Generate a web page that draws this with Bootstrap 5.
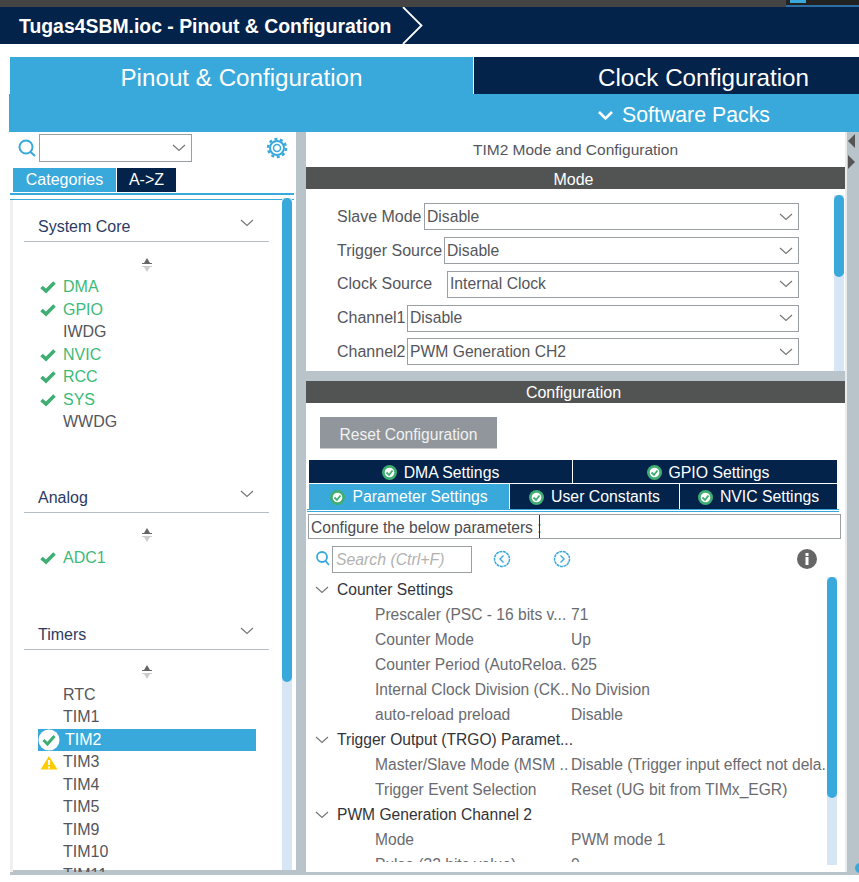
<!DOCTYPE html>
<html lang="en"><head><meta charset="utf-8"><title>Tugas4SBM.ioc</title>
<link href="https://cdn.jsdelivr.net/npm/bootstrap@5.3.0/dist/css/bootstrap.min.css" rel="stylesheet">
<style>
html,body{margin:0;height:882px;overflow:hidden;background:#fff}
body{width:859px;font:16px/22px "Liberation Sans",Arial,sans-serif;color:#55565c}
.cx-top{height:7px;background:#444;position:relative}
.cx-top i{display:block;position:absolute;right:0;top:0;width:73px;height:7px;background:#222;border-bottom:2px solid #2d6ea5}
.cx-top u{display:block;position:absolute;left:790px;top:0;width:16px;height:3px;background:#39a9dc}
.cx-title{height:37px;background:#03234b;color:#fff;font-weight:700;font-size:19.4px;padding-left:19px;position:relative}
.cx-title svg{position:absolute;left:402px;top:0}
.cx-gap{height:13px}
.cx-tabs{margin-left:10px;height:37px;font-size:24.2px;color:#fff}
.cx-tabs>div{display:flex;align-items:center;justify-content:center;padding-top:4px}
.cx-t1{width:463px;background:#39a9dc}
.cx-t2{width:386px;background:#03234b;border-left:1px solid #fff;padding-left:74px}
.cx-soft{margin-left:9px;height:38px;background:#39a9dc;color:#fff;font-size:21.3px;padding:4px 0 0 588px}
.cx-main{height:743px;margin-left:10px;border-bottom:3px solid #b8c3ca;background:#b8c3ca}
.cx-left{width:286px;background:#fff;position:relative;height:738px}
.cx-gut{width:10px;background:#b8c3ca}
.cx-right{width:539px;background:#b8c3ca;height:740px}
.cx-far{width:14px;background:#b8c3ca;position:relative;height:740px;border-left:2px solid #e9ecef}
.cx-far svg{position:absolute;left:0}
.cx-srch{height:36px;padding:0 0 4px 7px}
.cx-combo{border:1px solid #9a9fa3;height:28px;background:#fff;display:flex;align-items:center;justify-content:flex-end;padding-right:5px}
.cx-cw{width:153px;margin-left:2px}
.cx-gear{margin-left:74px}
.cx-cat{padding-left:3px;height:24px}
.cx-cat div{height:24px;line-height:24px;text-align:center;color:#fff}
.cx-cat .cx-a{width:103px;background:#39a9dc}
.cx-cat .cx-b{width:59px;background:#03234b;margin-left:1px}
.cx-dbl{height:4px;margin:1px 0 0;border-top:2px solid #39a9dc;border-bottom:1px solid #39a9dc;width:284px;box-sizing:content-box}
.cx-list{border-left:3px solid #f0f0f0;height:672px;overflow:hidden;padding:10px 0 0 11px}
.cx-hd{width:245px;height:32px;border-bottom:1px solid #b3bec7;color:#2d3a63;padding:6px 0 0 14px;display:flex;justify-content:space-between}
.cx-hd svg{margin:3px 15px 0 0}
.cx-sort{height:34px;padding-top:11px;width:245px;display:flex;align-items:center;justify-content:center}
.cx-it{height:22.5px;line-height:22.5px;padding-left:38px;width:232px;position:relative;white-space:nowrap;margin-left:1px}
.cx-it.cx-g{color:#3dba78}
.cx-it svg{position:absolute;left:15px;top:4px}
.cx-it.cx-sel{background:#39a9dc;color:#fff;padding-left:27px;width:218px;margin-left:14px}
.cx-sel svg{left:0;top:0}
.cx-list .cx-sec2{margin-top:47px}
.cx-list .cx-sec3{margin-top:48.6px}
.cx-sb{position:absolute;width:10px;background:#d6e6f4}
.cx-sb i{display:block;background:#39a9dc;border-radius:5px}
.cx-lsb{left:272px;top:66px;height:672px}
.cx-lsb i{height:484px}
.cx-panel{background:#fff;position:relative}
.cx-p1{height:239px}
.cx-pt{height:35px;text-align:center;padding-top:7px;font-size:15.5px}
.cx-bar{height:22px;line-height:25px;background:#525453;color:#fff;text-align:center;padding-right:4px}
.cx-p2 .cx-bar{line-height:23px}
.cx-form{padding:14.4px 0 0 31px}
.cx-fr{height:27px;margin-bottom:6.75px;display:flex;align-items:center;white-space:nowrap}
.cx-fr>span{flex:none}
.cx-fr .cx-combo{height:27px;padding-left:2px;justify-content:space-between;flex:none;color:#55565c;font-size:15.7px}
.cx-a87{width:87px}.cx-a107{width:107px}.cx-a110{width:110px}.cx-a70{width:70px}
.cx-b375{width:375px!important}.cx-b355{width:355px!important}.cx-b352{width:352px!important}.cx-b392{width:392px!important}
.cx-msb{left:528px;top:63px;height:176px}
.cx-msb i{height:82px}
.cx-sp{height:10px}
.cx-p2{height:491px}
.cx-rbtn{margin:14px 0 11px 14px;width:177px;height:32px;background:#90969b;color:#f1f1f1;border:0;border-radius:0;font:15.6px "Liberation Sans",Arial,sans-serif;border-bottom:1px solid #c8ccce;display:block;padding:5px 0 0}
.cx-tr{margin-left:3px;width:528px;height:23px;margin-bottom:1px;gap:1px;font-size:15.8px}
.cx-tb{background:#03234b;color:#fff;display:flex;align-items:center;justify-content:center;gap:7px;height:100%;padding-top:2px}
.cx-r2 .cx-tb{padding-top:1px}
.cx-pl{padding-left:6px}
.cx-on{background:#39a9dc}
.cx-r2{height:25px;margin-bottom:0}
.cx-w263{width:263px}.cx-w264{width:264px}.cx-w200{width:200px}.cx-w169{width:169px}.cx-w157{width:157px}
.cx-ln{margin:0 0 0 1px;height:3px;border-top:1px solid #39a9dc;border-bottom:1px solid #39a9dc;width:532px}
.cx-conf{margin:2px 0 0 2px;width:533px;height:25px;border:1px solid #9a9fa3;line-height:25px;padding-left:2px;white-space:nowrap;position:relative;color:#4a4b52;font-size:15.6px}
.cx-conf b{position:absolute;left:230px;top:0;height:23px;width:1px;background:#333}
.cx-sr{height:31px;margin-top:7px;padding-left:9px;position:relative}
.cx-inp{width:140px;height:27px;border:1px solid #9a9fa3;color:#b2b2b2;font-style:italic;padding-left:3px;line-height:26px;margin-left:1px;font-size:15.8px}
.cx-tree{height:285px;overflow:hidden;font-size:15.6px;color:#6a6b70}
.cx-row{height:25px;line-height:25px;display:flex;white-space:nowrap}
.cx-row span:first-child{width:265px;padding-left:69px;flex:none;overflow:hidden}
.cx-sec{color:#33343a;padding-left:9px;align-items:center}
.cx-sec svg{margin-right:8px;flex:none}
.cx-tsb{left:521px;top:196px;height:288px}
.cx-tsb i{height:221px}
.cx-ic1{margin:4px 0 0 21px}.cx-ic2{margin:4px 0 0 42px}.cx-ic3{margin:3px 0 0 226px}
.cx-a1{top:1px}.cx-a2{top:22px}
.cx-dot{position:absolute;left:8px;top:731px;width:10px;height:10px;border-radius:50%;background:#39a9dc}
</style></head><body>
<svg width="0" height="0" class="position-absolute"><defs>
<symbol id="chev" viewBox="0 0 14 8"><path d="M1 1 L7 6.5 L13 1" fill="none" stroke="#777" stroke-width="1.2"/></symbol>
<symbol id="tick" viewBox="0 0 16 14"><path d="M1.5 7 L6 11 L14.5 2.5" fill="none" stroke="#3fae73" stroke-width="3.6"/></symbol>
<symbol id="sort" viewBox="0 0 12 14"><path d="M6 0 L9 5 H11 V6 H1 V5 H3Z" fill="#666"/><path d="M1 8 H11 V9 H9 L6 14 L3 9 H1Z" fill="#ccc"/></symbol>
<symbol id="ok" viewBox="0 0 15 15"><circle cx="7.5" cy="7.5" r="7.5" fill="#3fae73"/><circle cx="7.5" cy="7.5" r="4.8" fill="#fff"/><path d="M4.5 7.5 L7 10 L10.5 5.5" fill="none" stroke="#3fae73" stroke-width="1.8"/></symbol>
</defs></svg>
<div class="cx-top"><i></i><u></u></div>
<div class="cx-title d-flex align-items-center">Tugas4SBM.ioc - Pinout &amp; Configuration
<svg width="22" height="37" viewBox="0 0 22 37"><path d="M1 0 L19.5 18.5 L1 37" fill="none" stroke="#fff" stroke-width="1.8"/></svg></div>
<div class="cx-gap"></div>
<div class="cx-tabs d-flex"><div class="cx-t1">Pinout &amp; Configuration</div><div class="cx-t2">Clock Configuration</div></div>
<div class="cx-soft d-flex align-items-center"><svg width="17" height="11" viewBox="0 0 17 11" class="me-2"><path d="M2 2 L8.5 8.5 L15 2" fill="none" stroke="#fff" stroke-width="2.6"/></svg>Software Packs</div>

<div class="cx-main d-flex">
 <div class="cx-left">
  <div class="cx-srch d-flex align-items-center">
   <svg width="20" height="21" viewBox="0 0 20 21"><circle cx="9" cy="9" r="6.5" fill="none" stroke="#39a9dc" stroke-width="2"/><path d="M13.5 14 L18 18" stroke="#39a9dc" stroke-width="2.2"/></svg>
   <div class="cx-combo cx-cw"><svg width="14" height="8"><use href="#chev"/></svg></div>
   <svg class="cx-gear" width="22" height="22" viewBox="0 0 22 22"><circle cx="11" cy="11" r="7" fill="none" stroke="#39a9dc" stroke-width="2"/><circle cx="11" cy="11" r="3.5" fill="none" stroke="#39a9dc" stroke-width="1.5"/><circle cx="11" cy="11" r="9" fill="none" stroke="#39a9dc" stroke-width="2.4" stroke-dasharray="3 2.65"/></svg>
  </div>
  <div class="cx-cat d-flex"><div class="cx-a">Categories</div><div class="cx-b">A-&gt;Z</div></div>
  <div class="cx-dbl"></div>
  <div class="cx-list">
   <div class="cx-hd"><span>System Core</span><svg width="14" height="8"><use href="#chev"/></svg></div>
   <div class="cx-sort"><svg width="12" height="14"><use href="#sort"/></svg></div>
   <div class="cx-it cx-g"><svg width="16" height="14"><use href="#tick"/></svg>DMA</div>
   <div class="cx-it cx-g"><svg width="16" height="14"><use href="#tick"/></svg>GPIO</div>
   <div class="cx-it">IWDG</div>
   <div class="cx-it cx-g"><svg width="16" height="14"><use href="#tick"/></svg>NVIC</div>
   <div class="cx-it cx-g"><svg width="16" height="14"><use href="#tick"/></svg>RCC</div>
   <div class="cx-it cx-g"><svg width="16" height="14"><use href="#tick"/></svg>SYS</div>
   <div class="cx-it">WWDG</div>
   <div class="cx-hd cx-sec2"><span>Analog</span><svg width="14" height="8"><use href="#chev"/></svg></div>
   <div class="cx-sort"><svg width="12" height="14"><use href="#sort"/></svg></div>
   <div class="cx-it cx-g"><svg width="16" height="14"><use href="#tick"/></svg>ADC1</div>
   <div class="cx-hd cx-sec3"><span>Timers</span><svg width="14" height="8"><use href="#chev"/></svg></div>
   <div class="cx-sort"><svg width="12" height="14"><use href="#sort"/></svg></div>
   <div class="cx-it">RTC</div>
   <div class="cx-it">TIM1</div>
   <div class="cx-it cx-sel"><svg width="22" height="22" viewBox="0 0 22 22"><circle cx="11" cy="11" r="10.5" fill="#fff"/><path d="M5.5 11 L9.5 15 L16.5 7" fill="none" stroke="#3fae73" stroke-width="3"/></svg>TIM2</div>
   <div class="cx-it"><svg width="18" height="15" viewBox="0 0 18 15"><path d="M9 1 L17.5 14.5 H0.5Z" fill="#fc0"/><path d="M9 5 V10 M9 11.5 V13.5" stroke="#fff" stroke-width="2"/></svg>TIM3</div>
   <div class="cx-it">TIM4</div>
   <div class="cx-it">TIM5</div>
   <div class="cx-it">TIM9</div>
   <div class="cx-it">TIM10</div>
   <div class="cx-it">TIM11</div>
  </div>
  <div class="cx-sb cx-lsb"><i></i></div>
 </div>
 <div class="cx-gut"></div>
 <div class="cx-right">
  <div class="cx-panel cx-p1">
   <div class="cx-pt">TIM2 Mode and Configuration</div>
   <div class="cx-bar">Mode</div>
   <div class="cx-form">
    <div class="cx-fr"><span class="cx-a87">Slave Mode</span><div class="cx-combo cx-b375">Disable<svg width="14" height="8"><use href="#chev"/></svg></div></div>
    <div class="cx-fr"><span class="cx-a107">Trigger Source</span><div class="cx-combo cx-b355">Disable<svg width="14" height="8"><use href="#chev"/></svg></div></div>
    <div class="cx-fr"><span class="cx-a110">Clock Source</span><div class="cx-combo cx-b352">Internal Clock<svg width="14" height="8"><use href="#chev"/></svg></div></div>
    <div class="cx-fr"><span class="cx-a70">Channel1</span><div class="cx-combo cx-b392">Disable<svg width="14" height="8"><use href="#chev"/></svg></div></div>
    <div class="cx-fr"><span class="cx-a70">Channel2</span><div class="cx-combo cx-b392">PWM Generation CH2<svg width="14" height="8"><use href="#chev"/></svg></div></div>
   </div>
   <div class="cx-sb cx-msb"><i></i></div>
  </div>
  <div class="cx-sp"></div>
  <div class="cx-panel cx-p2">
   <div class="cx-bar">Configuration</div>
   <button class="cx-rbtn">Reset Configuration</button>
   <div class="cx-tr d-flex">
    <div class="cx-tb cx-w263"><svg width="15" height="15"><use href="#ok"/></svg>DMA Settings</div>
    <div class="cx-tb cx-w264 cx-pl"><svg width="15" height="15"><use href="#ok"/></svg>GPIO Settings</div>
   </div>
   <div class="cx-tr cx-r2 d-flex">
    <div class="cx-tb cx-on cx-w200"><svg width="15" height="15"><use href="#ok"/></svg>Parameter Settings</div>
    <div class="cx-tb cx-w169"><svg width="15" height="15"><use href="#ok"/></svg>User Constants</div>
    <div class="cx-tb cx-w157"><svg width="15" height="15"><use href="#ok"/></svg>NVIC Settings</div>
   </div>
   <div class="cx-ln"></div>
   <div class="cx-conf">Configure the below parameters :<b></b></div>
   <div class="cx-sr d-flex align-items-start">
    <svg class="mt-1" width="16" height="17" viewBox="0 0 16 17"><circle cx="7" cy="7" r="5" fill="none" stroke="#39a9dc" stroke-width="1.8"/><path d="M10.5 11 L14 15" stroke="#39a9dc" stroke-width="1.8"/></svg>
    <div class="cx-inp">Search (Ctrl+F)</div>
    <svg class="cx-ic1" width="18" height="18" viewBox="0 0 18 18"><circle cx="9" cy="9" r="7.5" fill="none" stroke="#39a9dc" stroke-width="1.5" stroke-dasharray="3 .6"/><path d="M10.5 5.5 L7 9 L10.5 12.5" fill="none" stroke="#39a9dc" stroke-width="1.4"/></svg>
    <svg class="cx-ic2" width="18" height="18" viewBox="0 0 18 18"><circle cx="9" cy="9" r="7.5" fill="none" stroke="#39a9dc" stroke-width="1.5" stroke-dasharray="3 .6"/><path d="M7.5 5.5 L11 9 L7.5 12.5" fill="none" stroke="#39a9dc" stroke-width="1.4"/></svg>
    <svg class="cx-ic3" width="20" height="20" viewBox="0 0 20 20"><circle cx="10" cy="10" r="10" fill="#666"/><rect x="8.5" y="8" width="3" height="8" fill="#fff"/><rect x="8.5" y="4" width="3" height="3" fill="#fff"/></svg>
   </div>
   <div class="cx-tree">
    <div class="cx-row cx-sec"><svg width="14" height="8"><use href="#chev"/></svg>Counter Settings</div>
    <div class="cx-row"><span>Prescaler (PSC - 16 bits v...</span><span>71</span></div>
    <div class="cx-row"><span>Counter Mode</span><span>Up</span></div>
    <div class="cx-row"><span>Counter Period (AutoReloa.</span><span>625</span></div>
    <div class="cx-row"><span>Internal Clock Division (CK..</span><span>No Division</span></div>
    <div class="cx-row"><span>auto-reload preload</span><span>Disable</span></div>
    <div class="cx-row cx-sec"><svg width="14" height="8"><use href="#chev"/></svg>Trigger Output (TRGO) Paramet...</div>
    <div class="cx-row"><span>Master/Slave Mode (MSM ..</span><span>Disable (Trigger input effect not dela.</span></div>
    <div class="cx-row"><span>Trigger Event Selection</span><span>Reset (UG bit from TIMx_EGR)</span></div>
    <div class="cx-row cx-sec"><svg width="14" height="8"><use href="#chev"/></svg>PWM Generation Channel 2</div>
    <div class="cx-row"><span>Mode</span><span>PWM mode 1</span></div>
    <div class="cx-row"><span>Pulse (32 bits value)</span><span>0</span></div>
   </div>
   <div class="cx-sb cx-tsb"><i></i></div>
  </div>
 </div>
 <div class="cx-far">
  <svg class="cx-a1" width="12" height="16" viewBox="0 0 12 16"><path d="M8 1 L1 8 L8 15Z" fill="#555"/></svg>
  <svg class="cx-a2" width="12" height="16" viewBox="0 0 12 16"><path d="M1 1 L8 8 L1 15Z" fill="#555"/></svg>
  <div class="cx-dot"></div>
 </div>
</div>
</body></html>
